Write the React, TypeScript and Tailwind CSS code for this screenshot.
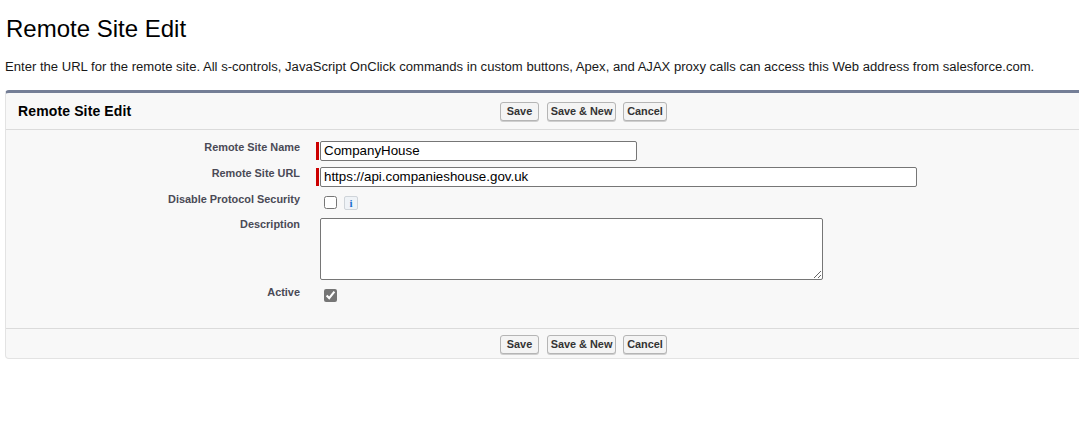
import React from "react";

function Buttons() {
  const cls =
    "h-[19px] rounded-[3px] border border-[#b5b5b5] bg-[#f4f4f4] p-0 text-center text-[10.9px] leading-none font-bold whitespace-nowrap text-[#333] [box-shadow:0_1px_0_#cfcfcf] [font-family:'Liberation_Sans',Arial,sans-serif]";
  return (
    <div className="flex pl-[494px]">
      <button type="button" className={`${cls} w-[39px]`}>Save</button>
      <button type="button" className={`${cls} ml-2 w-[69px]`}>Save &amp; New</button>
      <button type="button" className={`${cls} ml-[7px] w-[44px]`}>Cancel</button>
    </div>
  );
}

function Label({ children }: { children: React.ReactNode }) {
  return (
    <div className="w-[294px] shrink-0 text-right text-[10.9px] leading-[13px] font-bold text-[#4a4a56]">
      {children}
    </div>
  );
}

function RequiredBar() {
  return <div className="mt-px mr-px h-[18px] w-[3px] shrink-0 bg-[#c00]" />;
}

export default function App() {
  return (
    <div className="h-[431px] w-[1079px] overflow-hidden bg-white text-black [font-family:'Liberation_Sans',Arial,sans-serif]">
      <h1 className="pt-[15px] pl-[6px] text-[24px] leading-[28px] font-normal">Remote Site Edit</h1>
      <p className="mt-[15px] pl-[5px] text-[13.08px] leading-[18px] whitespace-nowrap text-[#181818]">
        Enter the URL for the remote site. All s-controls, JavaScript OnClick commands in custom buttons, Apex, and AJAX proxy calls can access this Web address from salesforce.com.
      </p>
      <div className="mt-[14px] ml-[5px] w-[1090px] rounded-[4px] border border-t-[3px] border-[#e3e3e3] border-t-[#747e96] bg-[#f8f8f8]">
        <div className="relative flex h-[37px] items-center border-b border-[#dbdbdb]">
          <h2 className="absolute top-[10px] left-[12px] text-[14px] leading-[16px] font-bold tracking-[0.13px]">Remote Site Edit</h2>
          <Buttons />
        </div>
        <div className="h-[198px] pt-[11px]">
          <div className="flex h-[26px] items-start">
            <Label>Remote Site Name</Label>
            <div className="ml-[16px] flex items-start">
              <RequiredBar />
              <input readOnly value="CompanyHouse" className="h-[20px] w-[317px] rounded-[2px] border border-[#767676] bg-white px-[3px] pb-[2px] text-[13.33px] outline-none" />
            </div>
          </div>
          <div className="flex h-[26px] items-start">
            <Label>Remote Site URL</Label>
            <div className="ml-[16px] flex items-start">
              <RequiredBar />
              <input readOnly value="https://api.companieshouse.gov.uk" className="h-[20px] w-[597px] rounded-[2px] border border-[#767676] bg-white px-[3px] pb-[2px] text-[13.33px] outline-none" />
            </div>
          </div>
          <div className="flex h-[25px] items-start">
            <Label>Disable Protocol Security</Label>
            <div className="mt-[3px] ml-[24px] flex items-start">
              <input type="checkbox" readOnly className="h-[13px] w-[13px]" />
              <div className="ml-[7px] flex h-[14px] w-[14px] items-center justify-center rounded-[2px] border border-[#cfd4d9] bg-[#eff3f7] text-[11px] leading-none font-bold text-[#1a6fd0] [font-family:'Liberation_Serif',serif]">
                i
              </div>
            </div>
          </div>
          <div className="flex h-[68px] items-start">
            <Label>Description</Label>
            <textarea readOnly className="ml-[20px] h-[62px] w-[503px] rounded-[2px] border border-[#767676] bg-white outline-none" />
          </div>
          <div className="flex items-start">
            <Label>Active</Label>
            <input type="checkbox" readOnly checked className="mt-[3px] ml-[24px] h-[13px] w-[13px] accent-[#767676]" />
          </div>
        </div>
        <div className="flex h-[30px] items-start border-t border-[#dbdbdb] pt-[6px]">
          <Buttons />
        </div>
      </div>
    </div>
  );
}
